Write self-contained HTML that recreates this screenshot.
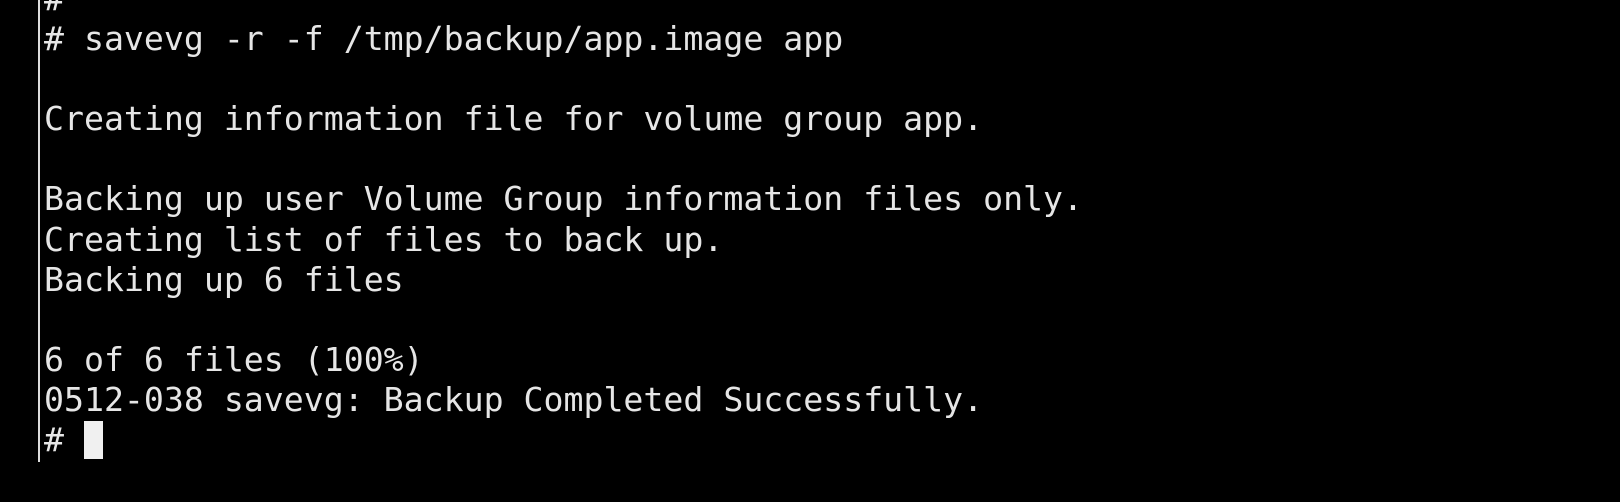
<!DOCTYPE html>
<html><head><meta charset="utf-8"><style>
html,body{margin:0;padding:0;background:#000;width:1620px;height:502px;overflow:hidden}
.bar{position:absolute;left:38px;top:0;width:2px;height:462px;background:#ddd}
pre{position:absolute;left:44px;top:-21px;margin:0;font-family:"DejaVu Sans Mono","Liberation Mono",monospace;font-size:33.2px;line-height:40.1px;color:#e6e6e6;letter-spacing:0}
.cur{position:absolute;left:84px;top:421px;width:19px;height:38px;background:#f0f0f0}
</style></head><body>
<div class="bar"></div>
<pre>#
# savevg -r -f /tmp/backup/app.image app

Creating information file for volume group app.

Backing up user Volume Group information files only.
Creating list of files to back up.
Backing up 6 files

6 of 6 files (100%)
0512-038 savevg: Backup Completed Successfully.
#</pre>
<div class="cur"></div>
</body></html>
